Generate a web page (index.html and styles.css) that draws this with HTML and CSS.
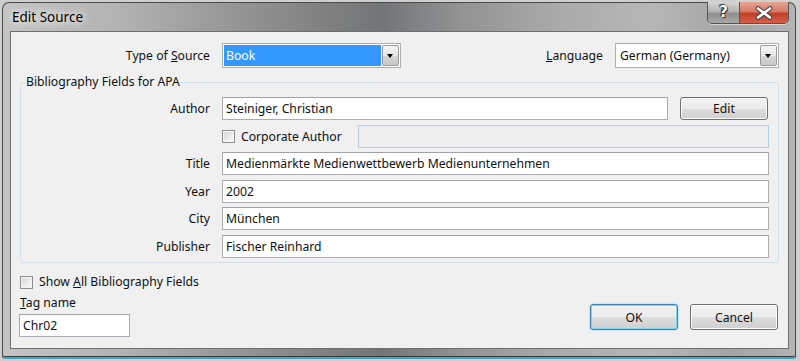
FILE: index.html
```html
<!DOCTYPE html>
<html lang="en">
<head>
    <meta charset="UTF-8">
    <title>Edit Source</title>
    <link rel="stylesheet" href="styles.css">
</head>
<body>
    <div class="window">
        <div class="titlebar">
            <span class="title">Edit Source</span>
            <div class="caption-buttons">
                <span class="cap-help">?</span>
                <span class="cap-close">
                    <svg width="18" height="14" viewBox="0 0 18 14">
                        <path d="M3 2.5 L15 11.5 M15 2.5 L3 11.5" stroke="#3a3a3a" stroke-width="4.6" stroke-linecap="round"/>
                        <path d="M3 2.5 L15 11.5 M15 2.5 L3 11.5" stroke="#ffffff" stroke-width="2.8" stroke-linecap="round"/>
                    </svg>
                </span>
            </div>
        </div>

        <div class="client">
            <div class="top-row">
                <span class="row-label">Type of <u>S</u>ource</span>
                <div class="combo combo-type">
                    <span class="combo-value selected">Book</span>
                    <span class="combo-arrow"></span>
                </div>
                <span class="lang-label"><u>L</u>anguage</span>
                <div class="combo combo-lang">
                    <span class="combo-value">German (Germany)</span>
                    <span class="combo-arrow"></span>
                </div>
            </div>

            <fieldset class="group">
                <legend>Bibliography Fields for APA</legend>
                <div class="row">
                    <span class="row-label">Author</span>
                    <div class="textbox">Steiniger, Christian</div>
                    <button class="btn btn-edit">Edit</button>
                </div>
                <div class="row">
                    <span class="row-label"></span>
                    <label class="corp-check"><span class="checkbox"></span><span>Corporate Author</span></label>
                    <div class="textbox disabled"></div>
                </div>
                <div class="row">
                    <span class="row-label">Title</span>
                    <div class="textbox">Medienmärkte Medienwettbewerb Medienunternehmen</div>
                </div>
                <div class="row">
                    <span class="row-label">Year</span>
                    <div class="textbox">2002</div>
                </div>
                <div class="row">
                    <span class="row-label">City</span>
                    <div class="textbox">München</div>
                </div>
                <div class="row">
                    <span class="row-label">Publisher</span>
                    <div class="textbox">Fischer Reinhard</div>
                </div>
            </fieldset>

            <div class="bottom">
                <div class="bottom-left">
                    <label class="check-row"><span class="checkbox"></span><span>Show <u>A</u>ll Bibliography Fields</span></label>
                    <div class="tag-label"><u>T</u>ag name</div>
                    <div class="textbox tag-box">Chr02</div>
                </div>
                <div class="buttons">
                    <button class="btn btn-default">OK</button>
                    <button class="btn">Cancel</button>
                </div>
            </div>
        </div>
    </div>
</body>
</html>
```

FILE: styles.css
```css
body {
    margin: 0;
    background: #cfcfcf;
    font-family: "Noto Sans", "Open Sans", sans-serif;
    font-size: 12.2px;
    color: #111;
}

.window {
    margin: 2px 4px 0 2px;
    height: 357px;
    box-sizing: border-box;
    border: 1px solid #4a4a4a;
    border-bottom: 2px solid #38aac4;
    border-radius: 7px 7px 3px 3px;
    padding: 0 6px 8px 7px;
    display: flex;
    flex-direction: column;
    background: linear-gradient(90deg, #c4c4c4 0%, #b2b2b2 15%, #989898 28%, #7e7e7e 42%, #727578 48%, #939393 58%, #aaaaaa 70%, #b6b6b6 82%, #a4a4a4 92%, #b3b3b3 100%);
    box-shadow: inset 0 -1px 0 #3c3c3c;
}

.titlebar {
    height: 28px;
    display: flex;
    justify-content: space-between;
    align-items: flex-start;
}

.title {
    padding: 4px 0 0 2px;
    font-size: 13.5px;
    line-height: 20px;
    color: #000;
    text-shadow: 0 0 6px #f4f4f4, 0 0 10px #ffffff;
}

.caption-buttons {
    display: flex;
    margin-top: -1px;
    border: 1px solid #555;
    border-top: none;
    border-radius: 0 0 5px 5px;
    overflow: hidden;
    box-shadow: 0 1px 0 rgba(255, 255, 255, 0.5);
}

.cap-help {
    width: 32px;
    height: 21px;
    box-sizing: border-box;
    text-align: center;
    font-family: "DejaVu Sans", sans-serif;
    font-weight: bold;
    font-size: 15px;
    line-height: 21px;
    color: #fff;
    text-shadow: 0 0 1px #000, 1px 1px 1px #333, -1px -1px 1px #333;
    background: linear-gradient(#d6d6d6 0%, #b4b4b4 45%, #8f8f8f 55%, #a8a8a8 100%);
    border-right: 1px solid #555;
}

.cap-close {
    width: 48px;
    height: 21px;
    display: flex;
    align-items: center;
    justify-content: center;
    background: linear-gradient(#e6a696 0%, #d77a66 45%, #c2402a 55%, #d4604a 100%);
}

.client {
    flex: 1;
    border: 1px solid #6e6e6e;
    background: #f0f0f0;
    padding: 11px 9px 11px 9px;
    display: flex;
    flex-direction: column;
}

.top-row {
    height: 25px;
    display: flex;
    align-items: center;
    gap: 12px;
}

.row-label {
    width: 189px;
    flex: none;
    text-align: right;
}

.top-row .row-label {
    width: 190px;
}

.lang-label {
    margin-left: auto;
}

.combo {
    height: 25px;
    box-sizing: border-box;
    display: flex;
    border: 1px solid #abadb3;
    background: #fff;
    padding: 1px;
}

.combo-type {
    width: 179px;
}

.combo-lang {
    width: 164px;
}

.combo-value {
    flex: 1;
    line-height: 21px;
    padding-left: 3px;
}

.combo-value.selected {
    background: #3399ff;
    color: #fff;
    padding-left: 2px;
}

.combo-arrow {
    width: 17px;
    box-sizing: border-box;
    border: 1px solid #9a9a9a;
    border-radius: 2px;
    background: linear-gradient(#f4f4f4 0%, #e6e6e6 50%, #d6d6d6 51%, #c8c8c8 100%);
    position: relative;
    margin-left: 1px;
}

.combo-arrow::after {
    content: "";
    position: absolute;
    left: 4px;
    top: 8px;
    border-left: 3.5px solid transparent;
    border-right: 3.5px solid transparent;
    border-top: 4px solid #000;
}

.group {
    margin: 6px 0 0;
    padding: 7px 9px 4px 0;
    border: 1px solid #d5dfe5;
    border-radius: 3px;
    min-width: 0;
    display: flex;
    flex-direction: column;
    gap: 4.6px;
}

.group legend {
    margin-left: 4px;
    padding: 0 1px;
    line-height: 16px;
}

.row {
    height: 23px;
    display: flex;
    align-items: center;
    gap: 12px;
}

.textbox {
    flex: 1;
    height: 23px;
    box-sizing: border-box;
    border: 1px solid #abadb3;
    border-top-color: #a0a2a8;
    background: #fff;
    padding: 0 3px;
    line-height: 21px;
    white-space: nowrap;
}

.textbox.disabled {
    background: #efefef;
    border: 1px solid #b7cde2;
    box-shadow: inset 0 0 0 1px #e8eef4;
}

.corp-check {
    width: 124px;
    display: flex;
    align-items: center;
}

.checkbox {
    width: 13px;
    height: 13px;
    box-sizing: border-box;
    flex: none;
    margin-right: 6px;
    border: 1px solid #8e8f8f;
    background: linear-gradient(135deg, #d8d8d8 0%, #ececec 60%, #fafafa 100%);
    box-shadow: inset 0 0 0 1px #f6f6f6;
}

.btn {
    width: 88px;
    height: 26px;
    box-sizing: border-box;
    border: 1px solid #707070;
    border-radius: 3px;
    background: linear-gradient(#f3f3f3 0%, #ebebeb 50%, #dddddd 51%, #cfcfcf 100%);
    box-shadow: inset 0 0 0 1px #fbfbfb;
    font-family: inherit;
    font-size: inherit;
    color: #111;
    padding: 0;
}

.btn-edit {
    height: 23px;
    margin-right: 1px;
}

.btn-default {
    border-color: #3c7fb1;
    box-shadow: inset 0 0 0 1px #7fd4f2, 0 0 2px #7fc8e8;
}

.bottom {
    flex: 1;
    display: flex;
    justify-content: space-between;
    align-items: flex-end;
}

.bottom-left {
    display: flex;
    flex-direction: column;
}

.check-row {
    display: flex;
    align-items: center;
    line-height: 16px;
    margin-top: 9px;
}

.tag-label {
    line-height: 16px;
    margin-top: 5px;
}

.tag-box {
    flex: none;
    width: 111px;
    margin: 3px 0 0 -1px;
}

.buttons {
    display: flex;
    gap: 12px;
    margin: 0 1px 7px 0;
}
```
